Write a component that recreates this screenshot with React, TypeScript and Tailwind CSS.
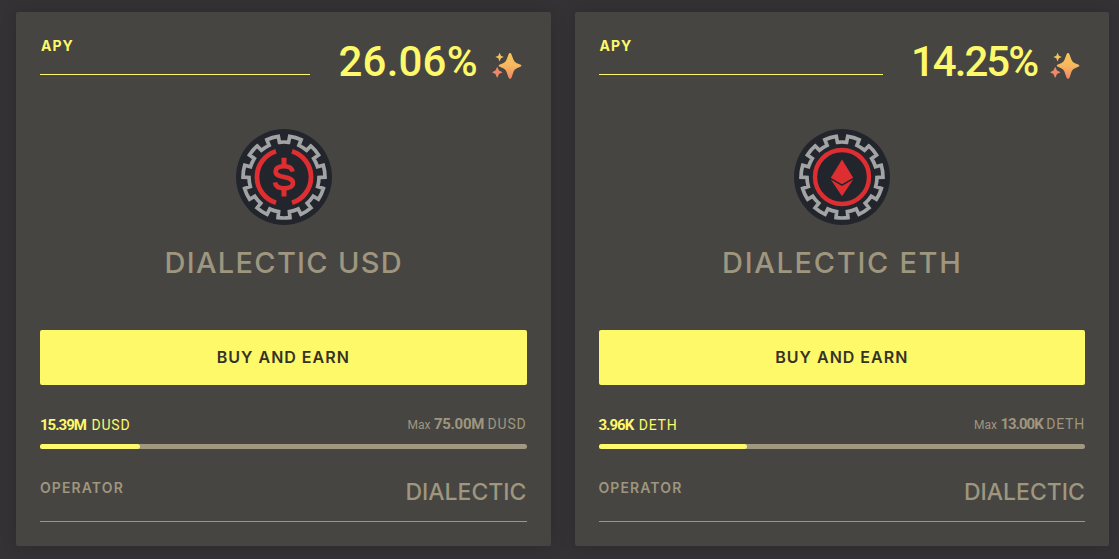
import React from "react";

const TEETH = 11;

// Outline of the chip: wide outer arcs joined by short inner notches
function gearPath() {
  const point = (radius: number, degrees: number) => {
    const a = ((degrees - 90) * Math.PI) / 180;
    return `${(48 + radius * Math.cos(a)).toFixed(2)} ${(48 + radius * Math.sin(a)).toFixed(2)}`;
  };
  const step = 360 / TEETH;
  let d = `M${point(35, -7.5)}`;
  for (let i = 0; i < TEETH; i++) {
    const notch = i * step;
    d += ` A35 35 0 0 1 ${point(35, notch + 7.5)}`;
    d += ` L${point(41, notch + 8)}`;
    d += ` A41 41 0 0 1 ${point(41, notch + step - 8)}`;
    d += ` L${point(35, notch + step - 7.5)}`;
  }
  return d + "Z";
}

function Coin({ children }: { children: React.ReactNode }) {
  return (
    <svg className="size-24" viewBox="0 0 96 96" fill="none">
      <circle cx="48" cy="48" r="48" fill="#22252b" />
      <path d={gearPath()} stroke="#a1a3a4" strokeWidth="3.7" />
      {children}
    </svg>
  );
}

function UsdCoin() {
  return (
    <Coin>
      <g stroke="#df2e32">
        <path d="M40 22.2A27 27 0 0 0 40 73.8M56 22.2A27 27 0 0 1 56 73.8" strokeWidth="4.8" />
        <path
          d="M56.6 42.6C56 39 53 37.2 48 37.2C43 37.2 39.6 39 39.6 42.4C39.6 46 43 47 48 48C53.5 49.1 57 50.3 57 54C57 57.5 53 59.3 48 59.3C43 59.3 39.6 57.3 39 53.4"
          strokeWidth="4.6"
        />
        <path d="M48 28.8V37M48 59V67.4" strokeWidth="5" />
      </g>
    </Coin>
  );
}

function EthCoin() {
  return (
    <Coin>
      <circle cx="48" cy="48" r="27" stroke="#df2e32" strokeWidth="4.4" />
      <path d="M48 30.5L59.2 48.8L48 55.2L36.8 48.8Z" fill="#df2e32" />
      <path d="M36.8 50.6L48 57L59.2 50.6L48 67.2Z" fill="#df2e32" />
    </Coin>
  );
}

function Sparkles({ id }: { id: string }) {
  return (
    <svg className="h-7 w-[30px]" viewBox="0 0 30 28">
      <defs>
        <linearGradient id={id} x1="0" y1="0" x2="0" y2="28" gradientUnits="userSpaceOnUse">
          <stop offset="0" stopColor="#f9c656" />
          <stop offset="0.5" stopColor="#f6b75e" />
          <stop offset="1" stopColor="#ee8066" />
        </linearGradient>
      </defs>
      <g fill={`url(#${id})`}>
        <path d="M18 1Q19 1 19.4 2.3L21.6 8Q22.4 10.2 24.4 10.9L28.8 12.7Q30 13.6 28.8 14.6L24.4 16.6Q22.4 17.4 21.6 19.6L19.5 25.8Q18 28 16.6 25.8L14.4 19.6Q13.6 17.4 11.6 16.6L7.3 14.6Q6.1 13.6 7.3 12.7L11.6 10.9Q13.6 10.2 14.4 8L16.6 2.3Q17 1 18 1Z" />
        <path d="M7.6.8L8.9 3.7L11.8 5L8.9 6.3L7.6 9.4L6.3 6.3L3.4 5L6.3 3.7Z" />
        <path d="M5.2 14.8L7 18.5L10.6 20.3L7 22.1L5.2 26L3.4 22.1L0 20.3L3.4 18.5Z" fill="#ee8967" />
      </g>
    </svg>
  );
}

interface Vault {
  name: string;
  nameClass: string;
  apy: string;
  apyClass: string;
  token: string;
  deposited: string;
  max: string;
  maxClass: string;
  filled: number;
  icon: React.ReactNode;
}

const vaults: Vault[] = [
  {
    name: "DIALECTIC USD",
    nameClass: "tracking-[1.3px]",
    apy: "26.06%",
    apyClass: "w-[140px] tracking-[0.2px]",
    token: "DUSD",
    deposited: "15.39M",
    max: "75.00M",
    maxClass: "tracking-[-0.3px]",
    filled: 20.5,
    icon: <UsdCoin />,
  },
  {
    name: "DIALECTIC ETH",
    nameClass: "tracking-[1.7px]",
    apy: "14.25%",
    apyClass: "w-[125px] -indent-px tracking-[-2px]",
    token: "DETH",
    deposited: "3.96K",
    max: "13.00K",
    maxClass: "tracking-[-1px]",
    filled: 30.5,
    icon: <EthCoin />,
  },
];

function VaultCard({ vault }: { vault: Vault }) {
  return (
    <div className="flex h-[534px] flex-col rounded-xs bg-[#474542] px-6 shadow-[0_0_16px_rgba(0,0,0,0.15)]">
      <div className="flex h-[88px] pt-6">
        <div className="h-[39px] flex-1 border-b border-[#fdf96a] pt-[3px]">
          <p className="pl-px text-[14px] leading-[14px] font-bold tracking-[1px]">APY</p>
        </div>
        <p className={`ml-[29px] whitespace-nowrap pt-[5px] font-[Roboto] text-[42px] leading-[42px] font-medium ${vault.apyClass}`}>
          {vault.apy}
        </p>
        <div className="mr-[5px] ml-[13px] pt-4">
          <Sparkles id={`sparkles-${vault.token}`} />
        </div>
      </div>

      <div className="flex flex-col items-center pt-[29px] pl-px text-[#9e967e]">
        {vault.icon}
        <h2 className={`mt-[22px] text-[29px] leading-8 font-medium whitespace-nowrap ${vault.nameClass}`}>{vault.name}</h2>
      </div>

      <button className="mt-[51px] h-[55px] shrink-0 rounded-xs bg-[#fdf968] pb-0.5 text-[16px] font-semibold tracking-[1px] text-[#353226]">
        BUY AND EARN
      </button>

      <div className="mt-[31px] flex h-[23px] items-start justify-between font-[Roboto] text-[14px] leading-[18px] whitespace-nowrap">
        <p>
          <b className="text-[15px] tracking-[-1px]">{vault.deposited}</b>{" "}
          <span className="ml-0.5 tracking-[0.8px]">{vault.token}</span>
        </p>
        <p className="-mt-px text-[#9e967e]">
          <span className="text-[12px]">Max</span>{" "}
          <b className={`text-[15px] ${vault.maxClass}`}>{vault.max}</b>{" "}
          <span className="tracking-[0.8px]">{vault.token}</span>
        </p>
      </div>
      <div className="mt-[5px] h-[5px] rounded-full bg-[#a09880]">
        <div className="h-full rounded-full bg-[#fdf96a]" style={{ width: `${vault.filled}%` }} />
      </div>

      <div className="mt-[31px] flex h-[42px] items-start justify-between border-b border-[#99958a] text-[#9e967e]">
        <p className="text-[14px] leading-4 font-semibold tracking-[1.1px]">OPERATOR</p>
        <p className="text-[23px] leading-6 font-medium">DIALECTIC</p>
      </div>
    </div>
  );
}

export default function App() {
  return (
    <div className="h-[559px] overflow-hidden bg-[#343235] pt-3 pr-[10px] pl-4 font-[Inter] text-[#fdf96a]">
      <div className="grid grid-cols-2 gap-6">
        {vaults.map((vault) => (
          <VaultCard key={vault.token} vault={vault} />
        ))}
      </div>
    </div>
  );
}
